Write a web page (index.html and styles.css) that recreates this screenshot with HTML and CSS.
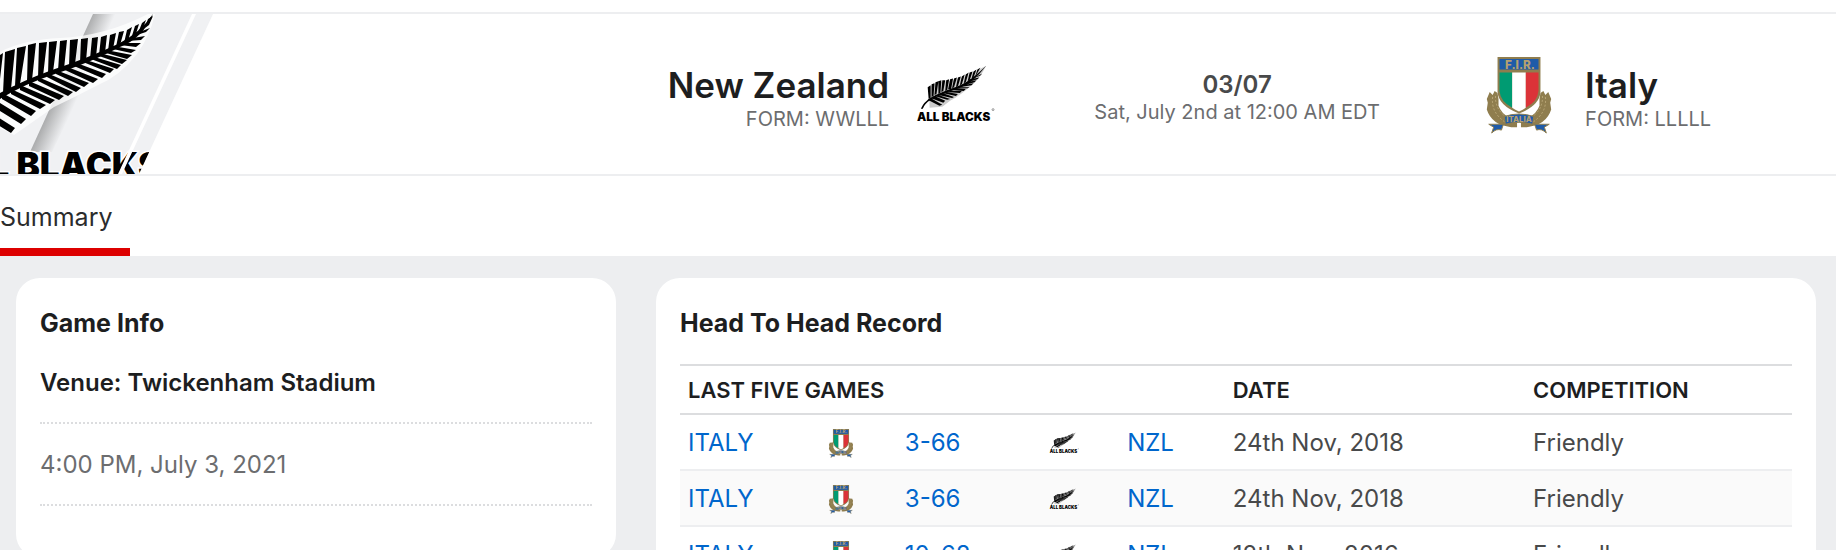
FILE: index.html
```html
<!DOCTYPE html>
<html lang="en">
<head>
    <meta charset="UTF-8">
    <meta name="viewport" content="width=device-width, initial-scale=1.0">
    <title>New Zealand vs Italy</title>
    <link rel="stylesheet" href="styles.css">
</head>
<body>

    <!-- Shared team logos -->
    <svg class="sprite" aria-hidden="true">
        <defs>
            <symbol id="fern" viewBox="-2 -11 82 82">
                <path class="fern-leaf" d="M13 44 L12 24 Q17 18 29 17 Q44 16 53 10 L71 1 Q64 15 56 21 Q45 31 34 37 L26 43 Z" opacity="0.2"/>
                <path class="fern-stem" d="M4 45 Q7 38 14 34 C28 25 43 24 56 14 Q64 8 71 1 Q64 10 57 16 C44 27 28 27 14 36 Q8 40 6 45 Z"/>
                <path class="fern-leaf" d="M12 35L11 23L14 21L14 34ZM15 33L15 20L18 19L17 32ZM18 31L19 18L22 17L20 30ZM22 30L22 17L25 16L24 29ZM25 28L26 16L29 16L27 27ZM29 27L30 16L33 15L31 26ZM32 25L34 15L37 14L35 25ZM36 24L38 14L41 13L38 23ZM40 23L42 13L45 12L42 22ZM44 21L46 12L49 10L46 20ZM48 19L50 10L53 8L50 18ZM52 17L54 8L57 7L54 16ZM56 14L58 7L61 5L58 13ZM60 11L62 5L65 3L61 10Z"/>
                <path class="fern-leaf" d="M11 36L23 42L26 41L14 34ZM14 34L27 39L29 37L18 32ZM18 32L31 36L34 35L22 31ZM22 31L36 34L38 33L26 29ZM26 29L40 32L42 30L30 28ZM30 28L44 29L46 27L34 27ZM34 26L48 27L50 25L38 25ZM38 25L52 24L54 23L42 23ZM43 23L56 21L58 19L47 21ZM48 21L59 18L61 16L51 18ZM52 18L62 15L64 13L55 15ZM56 15L65 11L67 9L59 13Z"/>
                <text class="fern-text" x="0" y="58" font-size="12">ALL BLACKS</text>
                <circle cx="78" cy="46" r="1" fill="none" stroke="#333" stroke-width="0.5"/>
            </symbol>
            <symbol id="crest" viewBox="-7 -3 82 82">
                <path fill="#8f7d4e" d="M4 36l3 3 2-4 3 2 1 6 0 7q3 8 11 12l8 4v6h-6Q6 70 1 54l1-7-1-4zM64 36l-3 3-2-4-3 2-1 6 0 7q-3 8-11 12l-8 4v6h6Q62 70 67 54l-1-7 1-4z"/>
                <path fill="none" stroke="#baa878" stroke-width="1" stroke-dasharray="2 2" d="M7 41Q5 57 20 67M10 40Q9 53 21 62M61 41Q63 57 48 67M58 40Q59 53 47 62"/>
                <path fill="#1f5ba8" stroke="#8f7d4e" stroke-width="1" d="M3 69h15l-2 6q-5-2-10 3l2-6zM65 69H50l2 6q5-2 10 3l-2-6z"/>
                <path fill="#1f5ba8" stroke="#8f7d4e" stroke-width="1" d="M19 61Q34 56 49 61l-1 8Q34 65 20 69z"/>
                <path fill="#8f7d4e" d="M12 0H56V36Q55 50 34 58Q13 50 12 36Z"/>
                <path fill="#1f5ba8" d="M14 2H54V13H14Z"/>
                <path fill="#009b72" d="M14 16H27V52Q15 46 14 35Z"/>
                <path fill="#fff" d="M27 16H41V52Q38 54 34 56Q30 54 27 52Z"/>
                <path fill="#db3338" d="M41 16H54V35Q53 46 41 52Z"/>
                <text class="crest-text" x="35" y="12" font-size="12" text-anchor="middle">F.I.R.</text>
                <text class="crest-text" x="34" y="67" font-size="8" text-anchor="middle">ITALIA</text>
            </symbol>
        </defs>
    </svg>

    <header class="scoreboard">
        <svg class="scoreboard-art" viewBox="0 0 216 160" aria-hidden="true">
            <defs>
                <linearGradient id="fold" gradientUnits="userSpaceOnUse" x1="60" y1="70" x2="80" y2="79">
                    <stop offset="0" stop-color="#a9aaab"/>
                    <stop offset="1" stop-color="#f0f1f3"/>
                </linearGradient>
                <clipPath id="slant">
                    <path d="M0 0H192L118 160H0Z M196 0H213L139 160H122Z"/>
                </clipPath>
            </defs>
            <path fill="#f0f1f3" d="M0 0H192L118 160H0Z M196 0H213L139 160H122Z"/>
            <path fill="url(#fold)" d="M93 0H120L52 138H30Z"/>
            <g class="fern-glow">
                <path d="M-4 40Q20 26 60 24Q105 22 148 0H155Q150 22 137 40Q120 62 98 71Q75 83 54 93L14 121L-4 112Z"/>
            </g>
            <path class="fern-stem" d="M0 79Q22 67 52 56Q88 44 118 30Q140 19 153 0Q143 24 120 33Q92 48 55 60Q24 70 0 85Z"/>
            <path class="fern-leaf" d="M0 41L3 39L0 65ZM5 38L15 35L11 75L3 79ZM17 34L26 32L20 70L15 72ZM28 31L36 29L32 66L27 68ZM39 29L47 28L43 62L38 64ZM49 28L57 27L53 58L48 60ZM60 27L67 26L64 55L58 57ZM70 26L78 25L75 50L69 52ZM81 25L88 24L86 47L80 49ZM92 24L98 23L96 43L90 45ZM101 23L107 21L105 39L99 41ZM110 21L116 19L113 35L108 37ZM119 18L124 17L120 31L116 33ZM127 16L132 13L128 27L124 29ZM135 12L139 10L135 23L131 25ZM142 9L146 6L142 17L138 19ZM148 5L153 2L149 11L145 14Z"/>
            <path class="fern-leaf" d="M-20 92L15 114L11 119L-20 100ZM-8 84L26 105L21 110L-8 92ZM2 79L36 97L31 102L2 85ZM11 75L46 91L40 95L11 80ZM20 71L55 86L50 90L20 76ZM29 67L64 82L59 86L29 72ZM38 63L73 78L68 82L38 67ZM47 59L81 74L76 78L47 63ZM56 56L89 69L84 73L56 60ZM65 52L98 65L93 69L65 56ZM74 48L106 60L102 64L74 52ZM83 45L114 55L110 59L83 48ZM91 42L121 51L117 55L91 45ZM99 39L127 46L122 50L99 42ZM106 36L132 41L127 45L106 39ZM113 32L136 36L131 39L113 35ZM120 29L141 29L136 33L120 31ZM127 25L145 22L141 26L127 27ZM134 20L150 14L146 18L134 22Z"/>
            <text class="fern-banner" clip-path="url(#slant)" x="-58" y="164" font-size="35">ALL BLACKS</text>
        </svg>
        <div class="team home">
            <div class="team-text">
                <h2 class="team-name">New Zealand</h2>
                <p class="team-form">FORM: WWLLL</p>
            </div>
            <svg class="team-logo" role="img" aria-label="All Blacks"><use href="#fern"/></svg>
        </div>
        <div class="game-status">
            <p class="game-score">03/07</p>
            <p class="game-time">Sat, July 2nd at 12:00 AM EDT</p>
        </div>
        <div class="team away">
            <svg class="team-logo" role="img" aria-label="Italy"><use href="#crest"/></svg>
            <div class="team-text">
                <h2 class="team-name">Italy</h2>
                <p class="team-form">FORM: LLLLL</p>
            </div>
        </div>
    </header>

    <nav class="tabs">
        <a class="tab active" href="#summary">Summary</a>
    </nav>

    <main class="content" id="summary">
        <section class="card">
            <h3 class="card-title">Game Info</h3>
            <p class="venue">Venue: Twickenham Stadium</p>
            <p class="kickoff">4:00 PM, July 3, 2021</p>
        </section>

        <section class="card">
            <h3 class="card-title">Head To Head Record</h3>
            <table class="records">
                <colgroup>
                    <col class="col-team">
                    <col class="col-logo">
                    <col class="col-score">
                    <col class="col-logo">
                    <col class="col-team">
                    <col class="col-date">
                    <col>
                </colgroup>
                <thead>
                    <tr>
                        <th colspan="5">LAST FIVE GAMES</th>
                        <th>DATE</th>
                        <th>COMPETITION</th>
                    </tr>
                </thead>
                <tbody>
                    <tr>
                        <td><a href="#italy">ITALY</a></td>
                        <td class="logo-cell"><svg class="row-logo" role="img" aria-label="Italy"><use href="#crest"/></svg></td>
                        <td><a href="#game1">3-66</a></td>
                        <td class="logo-cell"><svg class="row-logo" role="img" aria-label="All Blacks"><use href="#fern"/></svg></td>
                        <td><a href="#nzl">NZL</a></td>
                        <td>24th Nov, 2018</td>
                        <td>Friendly</td>
                    </tr>
                    <tr>
                        <td><a href="#italy">ITALY</a></td>
                        <td class="logo-cell"><svg class="row-logo" role="img" aria-label="Italy"><use href="#crest"/></svg></td>
                        <td><a href="#game2">3-66</a></td>
                        <td class="logo-cell"><svg class="row-logo" role="img" aria-label="All Blacks"><use href="#fern"/></svg></td>
                        <td><a href="#nzl">NZL</a></td>
                        <td>24th Nov, 2018</td>
                        <td>Friendly</td>
                    </tr>
                    <tr>
                        <td><a href="#italy">ITALY</a></td>
                        <td class="logo-cell"><svg class="row-logo" role="img" aria-label="Italy"><use href="#crest"/></svg></td>
                        <td><a href="#game3">10-68</a></td>
                        <td class="logo-cell"><svg class="row-logo" role="img" aria-label="All Blacks"><use href="#fern"/></svg></td>
                        <td><a href="#nzl">NZL</a></td>
                        <td>12th Nov, 2016</td>
                        <td>Friendly</td>
                    </tr>
                </tbody>
            </table>
        </section>
    </main>

</body>
</html>
```
FILE: styles.css
```css
/* Basic Reset */
* {
    margin: 0;
    padding: 0;
    box-sizing: border-box;
}

body {
    min-height: 100vh;
    padding-top: 12px;
    background: #fff;
    color: #1d1e1f;
    font-family: Inter, "Liberation Sans", sans-serif;
    font-size: 24px;
    line-height: 30px;
}

a {
    color: #0066cc;
    text-decoration: none;
}

.sprite {
    position: absolute;
    width: 0;
    height: 0;
}

/* Hide the scrollbar, the page still scrolls */
html {
    scrollbar-width: none;
}

/* Scoreboard */
.scoreboard {
    position: relative;
    display: flex;
    align-items: center;
    height: 164px;
    border-top: 2px solid #edeef0;
    border-bottom: 2px solid #edeef0;
}

.scoreboard-art {
    position: absolute;
    left: 0;
    top: 0;
    width: 216px;
    height: 160px;
}

.team {
    display: flex;
    align-items: center;
    gap: 26px;
}

.home {
    width: 54.2%;
    justify-content: flex-end;
    text-align: right;
}

.team-text,
.game-status {
    padding-top: 5px;
}

.team-name {
    font-size: 35px;
    font-weight: 600;
    line-height: 44px;
}

.team-form {
    font-size: 20px;
    line-height: 24px;
    color: #6c6d6f;
}

.team-logo {
    width: 80px;
    height: 80px;
}

.game-status {
    width: 484px;
    text-align: center;
    color: #6c6d6f;
}

.game-score {
    font-weight: 600;
    line-height: 30px;
    color: #48494a;
}

.game-time {
    font-size: 20px;
    line-height: 24px;
}

.fern-stem,
.fern-leaf {
    fill: #000;
}

.fern-glow {
    fill: #fff;
    opacity: 0.75;
}

.fern-text,
.fern-banner {
    font-family: Inter, sans-serif;
    font-weight: 900;
}

.fern-banner {
    stroke: #fff;
    stroke-width: 3px;
    paint-order: stroke;
}

.crest-text {
    font-family: Inter, sans-serif;
    font-weight: 800;
    fill: #b5a070;
}

/* Tabs */
.tabs {
    display: flex;
    height: 80px;
}

.tab {
    padding: 26px 17px 0 0;
    border-bottom: 8px solid transparent;
    color: #2b2c2d;
    font-size: 25px;
}

.tab.active {
    border-color: #dd0000;
}

/* Cards */
.content {
    display: grid;
    grid-template-columns: 600fr 1160fr;
    gap: 40px;
    align-items: start;
    min-height: calc(100vh - 256px);
    padding: 22px 20px 22px 16px;
    background: #edeef0;
}

.card {
    padding: 30px 24px 52px;
    border-radius: 24px;
    background: #fff;
}

.card-title {
    font-size: 25px;
    font-weight: 700;
    line-height: 30px;
}

.venue,
.kickoff {
    padding: 26px 0 24px;
    border-bottom: 2px dotted #dcdddf;
}

.venue {
    padding-top: 30px;
    font-weight: 600;
}

.kickoff {
    color: #6c6d6f;
}

/* Head to head table */
.records {
    width: 100%;
    margin-top: 26px;
    table-layout: fixed;
    border-collapse: collapse;
    color: #48494a;
}

.col-team {
    width: 9.5%;
}

.col-logo,
.col-score {
    width: 10%;
}

.col-date {
    width: 27%;
}

.records th {
    padding: 9px 8px 8px;
    border-top: 2px solid #dcdddf;
    border-bottom: 2px solid #dcdddf;
    color: #1d1e1f;
    font-size: 22px;
    font-weight: 600;
    text-align: left;
}

.records td {
    height: 56px;
    padding: 2px 8px 0;
    border-bottom: 2px solid #edeef0;
}

.records tbody tr:nth-child(even) {
    background: #fafafa;
}

.records .logo-cell {
    text-align: center;
}

.row-logo {
    display: block;
    width: 30px;
    height: 30px;
    margin: 0 auto;
}
```
